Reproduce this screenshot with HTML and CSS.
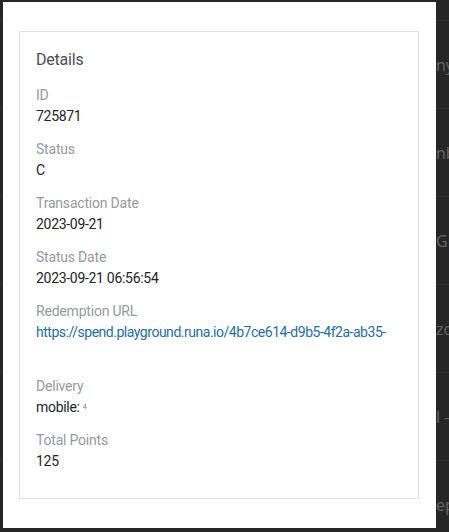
FILE: index.html
```html
<!DOCTYPE html>
<html lang="en">
<head>
    <meta charset="UTF-8">
    <meta name="viewport" content="width=device-width, initial-scale=1.0">
    <link rel="stylesheet" href="styles.css">
    <title>Transaction details</title>
</head>
<body>
    <div id="table">
        <div class="row first"></div>
        <div class="row"><span class="cell">ny</span></div>
        <div class="row"><span class="cell">nb</span></div>
        <div class="row"><span class="cell">Gi</span></div>
        <div class="row"><span class="cell">zo</span></div>
        <div class="row"><span class="cell">l -</span></div>
        <div class="row"><span class="cell">ep</span></div>
    </div>

    <div id="modal">
        <div class="card">
            <h2 class="card-title">Details</h2>
            <div class="field">
                <div class="label">ID</div>
                <div class="value">725871</div>
            </div>
            <div class="field">
                <div class="label">Status</div>
                <div class="value">C</div>
            </div>
            <div class="field">
                <div class="label">Transaction Date</div>
                <div class="value">2023-09-21</div>
            </div>
            <div class="field">
                <div class="label">Status Date</div>
                <div class="value">2023-09-21 06:56:54</div>
            </div>
            <div class="field">
                <div class="label">Redemption URL</div>
                <div class="value url"><a href="#">https://spend.playground.runa.io/4b7ce614-d9b5-4f2a-ab35-</a></div>
            </div>
            <div class="field">
                <div class="label">Delivery</div>
                <div class="value">mobile: <span class="redacted">4</span></div>
            </div>
            <div class="field">
                <div class="label">Total Points</div>
                <div class="value">125</div>
            </div>
        </div>
    </div>
</body>
</html>
```

FILE: styles.css
```css
body {
    font-family: Roboto, "Liberation Sans", sans-serif;
    margin: 0;
    padding: 0;
    height: 532px;
    overflow: hidden;
    background-color: #262626;
}
#table {
    display: flex;
    flex-direction: column;
}
.row {
    height: 87px;
    border-top: 1px solid #333333;
    display: flex;
    align-items: center;
    padding-left: 436px;
    font-family: "Open Sans", sans-serif;
    font-size: 16px;
    color: #666666;
    white-space: nowrap;
}
.row.first {
    height: 20px;
    border-top: none;
}
#modal {
    position: absolute;
    left: 3px;
    top: 2px;
    width: 433px;
    height: 526px;
    box-sizing: border-box;
    padding: 29px 17px 0 16px;
    background-color: #fff;
}
.card {
    border: 1px solid #dee2e6;
    padding: 16px 16px 16px;
    height: 468px;
    box-sizing: border-box;
}
.card-title {
    margin: 0 0 13px;
    font-size: 16px;
    font-weight: normal;
    line-height: 24px;
    color: #4a4f55;
    letter-spacing: -0.2px;
}
.field {
    margin-bottom: 12px;
}
.label {
    font-size: 14px;
    line-height: 21px;
    color: #939aa1;
    letter-spacing: -0.2px;
}
.value {
    font-size: 14px;
    line-height: 21px;
    color: #212529;
    letter-spacing: -0.3px;
    white-space: nowrap;
}
.value.url {
    height: 42px;
    letter-spacing: -0.48px;
}
.value a {
    color: #1d6fa5;
    text-decoration: none;
}
.redacted {
    font-size: 7px;
    line-height: 1;
    vertical-align: 3px;
    color: #777;
}
```
